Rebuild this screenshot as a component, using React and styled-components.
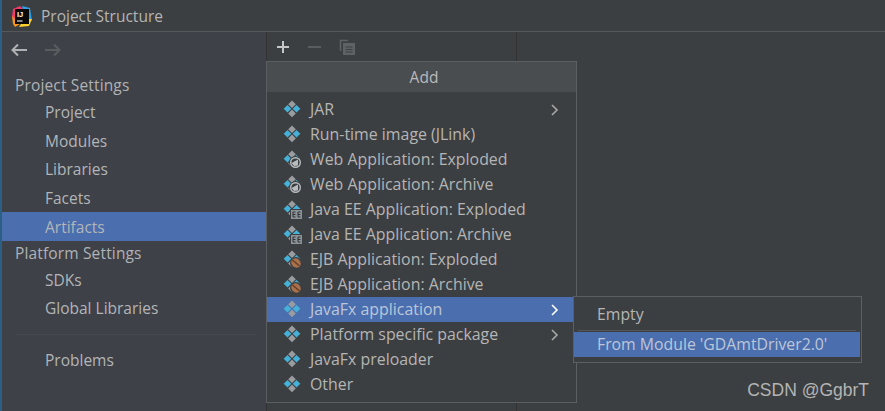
import styled, { createGlobalStyle } from "styled-components";

const GlobalStyle = createGlobalStyle`
  html, body { margin: 0; padding: 0; background: #3c3f41; }
  body { font-family: "Open Sans", "Noto Sans", sans-serif; overflow: hidden; }
`;

const Window = styled.div`
  position: relative;
  width: 885px;
  height: 411px;
  overflow: hidden;
  background: #3c3f41;
  color: #bbbbbb;
  border-left: 2px solid #2c5f86;
  box-sizing: border-box;
`;
const TitleBar = styled.div`
  height: 31px;
  display: flex;
  align-items: center;
  gap: 9px;
  padding-left: 9px;
  background: #3c3f41;
  border-bottom: 1px solid #55585a;
  font-size: 15.5px;
  color: #b4b4b4;
`;
const Body = styled.div`
  display: flex;
  height: 379px;
`;
const Sidebar = styled.div`
  width: 264px;
  flex: none;
  background: #3e4147;
  border-right: 1px solid #323232;
`;
const NavArrows = styled.div`
  height: 36px;
  margin-bottom: 5px;
  display: flex;
  align-items: center;
  gap: 16px;
  padding-left: 8px;
`;
const GroupLabel = styled.div`
  height: 25px;
  line-height: 25px;
  padding-left: 13px;
  font-size: 15.5px;
  color: #b0b2b5;
  letter-spacing: 0.15px;
`;
const NavItem = styled.div`
  height: ${(p) => p.$h || 28.5}px;
  line-height: ${(p) => (p.$active ? 31 : p.$h || 28.5)}px;
  padding-left: 43px;
  font-size: 15.5px;
  color: #b3b5b8;
  background: ${(p) => (p.$active ? "#4b6eaf" : "transparent")};
`;
const Divider = styled.div`
  height: 1px;
  margin: 12px 10px 11px 14px;
  background: #45484d;
`;
const MiddlePanel = styled.div`
  width: 249px;
  flex: none;
  border-right: 1px solid #323232;
`;
const Toolbar = styled.div`
  height: 30px;
  display: flex;
  align-items: center;
  gap: 16px;
  padding-left: 9px;
`;
const Menu = styled.div`
  position: absolute;
  left: 264px;
  top: 61px;
  width: 311px;
  height: 342px;
  box-sizing: border-box;
  background: #3c3f41;
  border: 1px solid #5c5f61;
`;
const MenuHeader = styled.div`
  height: 30px;
  line-height: 30px;
  margin-bottom: 5px;
  text-align: center;
  font-size: 15.5px;
  background: #4a4d50;
  color: #b9b9b9;
  padding-left: 5px;
`;
const MenuRow = styled.div`
  height: 25px;
  margin-right: 3px;
  display: flex;
  align-items: center;
  gap: 8px;
  padding-left: 16px;
  font-size: 15.9px;
  background: ${(p) => (p.$active ? "#4b6eaf" : "transparent")};
  color: ${(p) => (p.$active ? "#bcc6d8" : "#b5b5b5")};
`;
const RowLabel = styled.span`
  flex: 1;
  white-space: nowrap;
  line-height: 24px;
  padding-bottom: 1px;
`;
const SubMenu = styled.div`
  position: absolute;
  left: 571px;
  top: 296px;
  width: 289px;
  height: 67px;
  box-sizing: border-box;
  background: #3c3f41;
  border: 1px solid #5c5f61;
  padding: 5px 1px 0 0;
`;
const SubRow = styled.div`
  height: 25px;
  line-height: 25px;
  padding-left: 23px;
  font-size: 15.8px;
  white-space: nowrap;
  color: ${(p) => (p.$active ? "#bcc6d8" : "#b5b5b5")};
  background: ${(p) => (p.$active ? "#4b6eaf" : "transparent")};
`;
const SubDivider = styled.div`
  height: 1px;
  margin: 3px 4px 1px;
  background: #55585a;
`;
const Watermark = styled.div`
  position: absolute;
  right: 16px;
  bottom: 10px;
  font-family: "Liberation Sans", sans-serif;
  font-size: 17.5px;
  color: #b4b4b4;
`;

const Logo = () => (
  <svg width="21" height="22" viewBox="0 0 21 22">
    <path d="M2 4 L9 1 L13 5 L6 16 L1 12 Z" fill="#f5396b" />
    <path d="M11 1 L19 3 L21 16 L14 12 Z" fill="#2c9fe8" />
    <path d="M1 11 L9 19 L4 22 L2 19 Z" fill="#f7931e" />
    <path d="M13 14 L21 14 L18 21 L8 22 Z" fill="#fcd02a" />
    <rect x="4" y="4" width="14" height="15" fill="#0a0a0a" />
    <text x="6" y="11.5" fontFamily="Liberation Sans, sans-serif" fontSize="7.5" fontWeight="700" fill="#fff">IJ</text>
    <rect x="6" y="15.5" width="5.5" height="1" fill="#fff" />
  </svg>
);

const Arrow = ({ color, flip }) => (
  <svg width="18" height="14" viewBox="0 0 18 14" style={flip ? { transform: "scaleX(-1)" } : undefined}>
    <path d="M8 1.5 L2.5 7 L8 12.5 M3 7 H17" fill="none" stroke={color} strokeWidth="2" />
  </svg>
);

const Artifact = ({ badge }) => (
  <svg width="19" height="19" viewBox="0 0 19 19" style={{ flex: "none" }}>
    <path d="M9 0.5 L12.8 4.3 L9 8.1 L5.2 4.3 Z" fill="#9a9da0" />
    <path d="M4.5 5 L8.3 8.8 L4.5 12.6 L0.7 8.8 Z" fill="#45b1d9" />
    <path d="M13.5 5 L17.3 8.8 L13.5 12.6 L9.7 8.8 Z" fill="#45b1d9" />
    <path d="M9 9.6 L12.8 13.4 L9 17.2 L5.2 13.4 Z" fill="#9a9da0" />
    {badge === "web" && (
      <g>
        <circle cx="12.5" cy="12.5" r="6.5" fill="#3c3f41" />
        <circle cx="12.5" cy="12.5" r="4.8" fill="none" stroke="#b9bcbf" strokeWidth="1.4" />
        <path d="M8.5 13 L15 9.5 L15 15.5 L11 16 Z" fill="#b9bcbf" />
      </g>
    )}
    {badge === "ee" && (
      <g>
        <rect x="7" y="9" width="12" height="10" fill="#3c3f41" />
        <rect x="8" y="10" width="11" height="9" fill="#8b9298" />
        <path d="M10 12 H12.5 M10 14.5 H12.5 M10 17 H12.5 M10 12 V17 M15 12 H17.5 M15 14.5 H17.5 M15 17 H17.5 M15 12 V17" stroke="#2e3235" strokeWidth="1" />
      </g>
    )}
    {badge === "ejb" && (
      <g>
        <circle cx="13" cy="13" r="6" fill="#3c3f41" />
        <ellipse cx="13" cy="13" rx="5" ry="4.4" fill="#a9704a" transform="rotate(40 13 13)" />
        <path d="M9.5 10 L16.5 16" stroke="#5c3c28" strokeWidth="1.2" />
      </g>
    )}
  </svg>
);

const Chevron = ({ color = "#a8a8a8" }) => (
  <svg width="9" height="12" viewBox="0 0 9 12" style={{ marginRight: 14, flex: "none" }}>
    <path d="M2 1 L7 6 L2 11" fill="none" stroke={color} strokeWidth="1.6" />
  </svg>
);

const rows = [
  { label: "JAR", more: true },
  { label: "Run-time image (JLink)" },
  { label: "Web Application: Exploded", badge: "web" },
  { label: "Web Application: Archive", badge: "web" },
  { label: "Java EE Application: Exploded", badge: "ee" },
  { label: "Java EE Application: Archive", badge: "ee" },
  { label: "EJB Application: Exploded", badge: "ejb" },
  { label: "EJB Application: Archive", badge: "ejb" },
  { label: "JavaFx application", more: true, active: true },
  { label: "Platform specific package", more: true },
  { label: "JavaFx preloader" },
  { label: "Other" },
];

export default function App() {
  return (
    <Window>
      <GlobalStyle />
      <TitleBar>
        <Logo />
        Project Structure
      </TitleBar>
      <Body>
        <Sidebar>
          <NavArrows>
            <Arrow color="#afb1b3" />
            <Arrow color="#5a5d5f" flip />
          </NavArrows>
          <GroupLabel>Project Settings</GroupLabel>
          <NavItem>Project</NavItem>
          <NavItem>Modules</NavItem>
          <NavItem>Libraries</NavItem>
          <NavItem>Facets</NavItem>
          <NavItem $active $h={29}>Artifacts</NavItem>
          <GroupLabel>Platform Settings</GroupLabel>
          <NavItem $h={28}>SDKs</NavItem>
          <NavItem $h={28}>Global Libraries</NavItem>
          <Divider />
          <NavItem $h={28}>Problems</NavItem>
        </Sidebar>
        <MiddlePanel>
          <Toolbar>
            <svg width="14" height="14" viewBox="0 0 14 14">
              <path d="M7 1 V13 M1 7 H13" stroke="#c4c6c8" strokeWidth="2" />
            </svg>
            <svg width="17" height="14" viewBox="0 0 17 14">
              <path d="M2 7 H15" stroke="#5a5d5f" strokeWidth="2" />
            </svg>
            <svg width="17" height="17" viewBox="0 0 17 17">
              <path d="M1.5 12 V1.5 H9" fill="none" stroke="#5f6264" strokeWidth="1.5" />
              <rect x="4" y="4" width="12" height="12" fill="#5f6264" />
              <path d="M6.5 8 H13.5 M6.5 10.5 H13.5 M6.5 13 H13.5" stroke="#3c3f41" strokeWidth="1" />
            </svg>
          </Toolbar>
        </MiddlePanel>
      </Body>
      <Menu>
        <MenuHeader>Add</MenuHeader>
        {rows.map((r) => (
          <MenuRow key={r.label} $active={r.active}>
            <Artifact badge={r.badge} />
            <RowLabel>{r.label}</RowLabel>
            {r.more && <Chevron color={r.active ? "#ffffff" : "#a8a8a8"} />}
          </MenuRow>
        ))}
      </Menu>
      <SubMenu>
        <SubRow>Empty</SubRow>
        <SubDivider />
        <SubRow $active>From Module 'GDAmtDriver2.0'</SubRow>
      </SubMenu>
      <Watermark>CSDN @GgbrT</Watermark>
    </Window>
  );
}
